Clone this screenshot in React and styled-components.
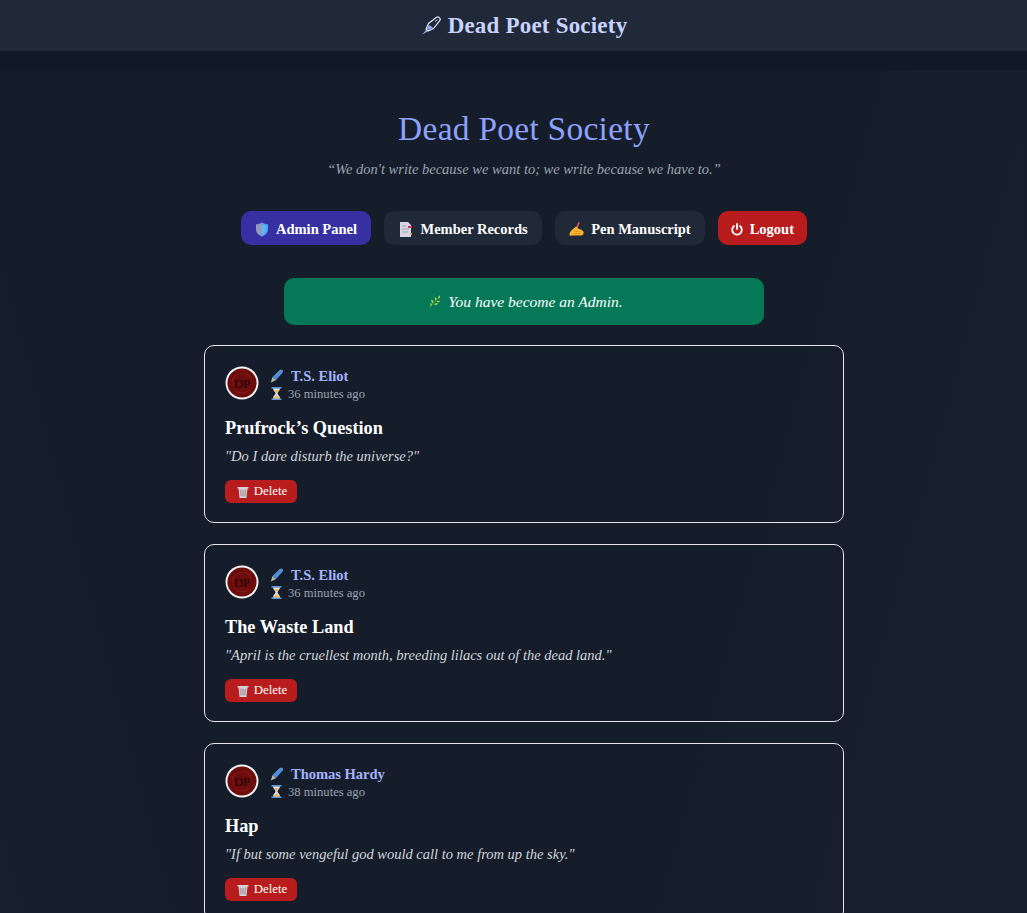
import React from "react";
import styled, { createGlobalStyle } from "styled-components";

const GlobalStyle = createGlobalStyle`
  html, body { margin: 0; padding: 0; background: #111827; }
  body { font-family: "Liberation Serif", "DejaVu Serif", serif; color: #e5e7eb; }
`;

const Page = styled.div`
  height: 913px;
  overflow: hidden;
  box-sizing: border-box;
`;

const TopBar = styled.header`
  height: 51px;
  padding-left: 21px;
  background: #1f2937;
  display: flex;
  align-items: center;
  justify-content: center;
  gap: 7px;
`;

const BarTitle = styled.span`
  color: #c7d2fe;
  font-size: 23px;
  font-weight: 700;
  letter-spacing: 0.2px;
`;

const Main = styled.main`
  margin-top: 19px;
  padding: 38px 0 0 21px;
  min-height: 900px;
  background:
    linear-gradient(105deg, rgba(255, 255, 255, 0) 60%, rgba(255, 255, 255, 0.006) 85%),
    linear-gradient(75deg, rgba(255, 255, 255, 0.006) 0%, rgba(255, 255, 255, 0) 25%),
    #151d2b;
  display: flex;
  flex-direction: column;
  align-items: center;
`;

const Heading = styled.h1`
  margin: 0;
  color: #8ea2fb;
  font-size: 33.4px;
  line-height: 42px;
  font-weight: 400;
  letter-spacing: 0.3px;
`;

const Motto = styled.p`
  margin: 8px 0 0;
  color: #9ca3af;
  font-size: 14.5px;
  line-height: 22px;
  font-style: italic;
`;

const Nav = styled.nav`
  margin-top: 31px;
  display: flex;
  gap: 13px;
`;

const NavButton = styled.a`
  height: 34px;
  padding: 2px ${(p) => p.$pad || 14}px 0;
  box-sizing: border-box;
  border-radius: 10px;
  display: flex;
  align-items: center;
  gap: 7px;
  color: #fff;
  font-size: 14.5px;
  font-weight: 700;
  background: ${(p) => p.$bg};
`;

const Flash = styled.div`
  margin-top: 33px;
  width: 480px;
  height: 47px;
  padding-left: 4px;
  box-sizing: border-box;
  border-radius: 10px;
  background: #047857;
  display: flex;
  align-items: center;
  justify-content: center;
  gap: 6px;
  color: #fff;
  font-size: 15.5px;
  font-style: italic;
`;

const Feed = styled.div`
  margin-top: 20px;
  width: 640px;
  display: flex;
  flex-direction: column;
  gap: 21px;
`;

const Card = styled.article`
  height: 178px;
  box-sizing: border-box;
  border: 1px solid #e5e7eb;
  border-radius: 10px;
  padding: 20px;
`;

const Author = styled.div`
  display: flex;
  align-items: center;
  gap: 11px;
  height: 34px;
`;

const Lines = styled.div`
  display: flex;
  flex-direction: column;
  gap: 1px;
  padding-top: 2px;
`;

const NameRow = styled.div`
  display: flex;
  align-items: center;
  gap: 7px;
  color: #a5b4fc;
  font-size: 14.5px;
  font-weight: 700;
  line-height: 18px;
`;

const TimeRow = styled.div`
  display: flex;
  align-items: center;
  gap: 6px;
  padding-left: 1px;
  color: #9ca3af;
  font-size: 12.6px;
  line-height: 16px;
`;

const PoemTitle = styled.h2`
  margin: 16px 0 0;
  color: #fff;
  font-size: 18.3px;
  line-height: 25px;
  font-weight: 700;
`;

const Quote = styled.p`
  margin: 5px 0 0;
  color: #d1d5db;
  font-size: 14.5px;
  line-height: 21px;
  font-style: italic;
`;

const DeleteButton = styled.button`
  margin-top: 13px;
  width: 72px;
  height: 23px;
  border: 0;
  border-radius: 6px;
  background: #b91c1c;
  color: #fff;
  font-family: inherit;
  font-size: 12.8px;
  display: flex;
  align-items: center;
  justify-content: center;
  gap: 5px;
  padding: 0 0 0 2px;
`;

const Quill = () => (
  <svg width="20" height="20" viewBox="0 0 20 20" fill="none">
    <path d="M19 2.500c-.8-1.300-2.200-1.800-3.500-1.300L7.500 7.500 5 13l2 2 5.500-2.500 6-7.500c.7-.8 1-1.700.5-2.500z" fill="#1f2937" stroke="#e0e7ff" strokeWidth="1.200" />
    <path d="M7.800 9l4.200 2.500-4 2.300-2.300-.9z" fill="#93a8f4" />
    <path d="M14 5.500l2.500-1.800" stroke="#c7d2fe" strokeWidth="1" />
    <path d="M5.500 13.500L1 18.800l5.300-3.300z" fill="#a5b4fc" />
  </svg>
);

const Shield = () => (
  <svg width="14" height="15" viewBox="0 0 14 15">
    <path d="M7 .5c2 1.300 3.800 1.700 6 1.800v5c0 3.500-2.500 5.800-6 7.200z" fill="#4fa8f5" />
    <path d="M7 .5C5 1.800 3.200 2.200 1 2.300v5c0 3.500 2.500 5.800 6 7.200z" fill="#8e9ac0" />
    <path d="M7 3c1.400.8 2.700 1.100 4 1.200v3c0 2.500-1.700 4-4 5.200z" fill="#64b5f6" />
  </svg>
);

const Records = () => (
  <svg width="15" height="15" viewBox="0 0 15 15">
    <path d="M2 0h8l3 3v12H2z" fill="#d9d4e4" />
    <path d="M4 4h4M4 7h7M4 10h6" stroke="#a89fb8" strokeWidth="1" />
    <rect x="10" y="4" width="4" height="2" fill="#d6364a" />
    <rect x="12" y="11" width="2" height="2" fill="#e6a23c" />
  </svg>
);

const WritingHand = () => (
  <svg width="15" height="15" viewBox="0 0 15 15">
    <path d="M9.500 0l1.500.8L8.500 6 7 5.300z" fill="#e2574c" />
    <path d="M.5 13c-.4-1.500 1-4 3-5.500L7 4.500c1 .5 1.800 1.300 2.500 2.300 2 .4 4 1.500 5 3 .5 1.700-.3 3.700-2 3.700H3C1.800 14 .8 14 .5 13z" fill="#fbb32f" />
    <path d="M5 9.500h6M4 11.500h8" stroke="#e8912a" strokeWidth="0.900" />
  </svg>
);

const Power = () => (
  <svg width="12" height="13" viewBox="0 0 12 13" fill="none" stroke="#fff" strokeWidth="1.800" strokeLinecap="round">
    <path d="M6 1v5" />
    <path d="M3 3a4.800 4.800 0 1 0 6 0" />
  </svg>
);

const Herb = () => (
  <svg width="13" height="13" viewBox="0 0 13 13">
    <path d="M1 12.500C3 9 6 6 11 2" stroke="#7aa32a" strokeWidth="0.900" fill="none" />
    <path d="M4 8C2.500 7.500 2 6 2.500 4.500 4 5.200 4.800 6.500 4 8zM7 5.500C6 5 5.500 3.500 6 2c1.300.8 1.800 2 1 3.500zM9.500 3.500C9 2.500 9.500 1 10.800.500c.4 1.300 0 2.500-1.300 3zM5 9.500c1-1.300 2.800-1.500 4-1-.8 1.300-2.500 1.800-4 1zM7.500 6.800c.9-1 2.500-1.300 3.800-.8-.8 1.200-2.300 1.500-3.800.8zM2 11c-.8-1-.8-2.300-.2-3.300C2.800 8.500 3 9.800 2 11z" fill="#b7e34a" />
  </svg>
);

const Pen = () => (
  <svg width="14" height="14" viewBox="0 0 14 14">
    <path d="M2.500 8L9.700 1c.9-.9 2.100-.7 2.800 0 .7.700.9 1.900 0 2.800L5.800 11.300z" fill="#4f8fd6" />
    <path d="M2.500 8l3.300 3.300L.8 13.400z" fill="#b9b6ac" />
  </svg>
);

const Hourglass = () => (
  <svg width="11" height="13" viewBox="0 0 11 13">
    <rect x="0.500" y="0" width="10" height="1.600" fill="#5b9bd5" />
    <rect x="0.500" y="11.400" width="10" height="1.600" fill="#5b9bd5" />
    <path d="M2 1.600h7c0 2.500-2.500 3.400-2.500 4.900S9 9 9 11.400H2c0-2.400 2.500-3.400 2.500-4.900S2 4.100 2 1.600z" fill="#dbe7f0" />
    <path d="M3 3h5c-.4 1.300-2.500 2-2.500 3.500C5.500 5 3.400 4.300 3 3zM2.800 11.400c.4-1.800 1.800-2.800 2.700-3.200.9.400 2.300 1.400 2.700 3.200z" fill="#f4b860" />
  </svg>
);

const Bin = () => (
  <svg width="12" height="12" viewBox="0 0 12 12">
    <path d="M0.500 1h11v1.500h-1L9.500 12h-7l-1-9.500h-1z" fill="#d5cfd8" />
    <path d="M3.500 3.500l.6 7M6 3.500v7M8.500 3.500l-.6 7M2.300 5h7.400M2.600 7h6.800M2.800 9h6.400" stroke="#a08f9c" strokeWidth="0.700" />
  </svg>
);

const SealLetters = styled.text`
  font-family: "Liberation Serif", serif;
  font-size: 13px;
  fill: #140303;
  text-anchor: middle;
`;

const Seal = () => (
  <svg width="34" height="34" viewBox="0 0 34 34" style={{ flexShrink: 0 }}>
    <circle cx="17" cy="17" r="16.500" fill="#f3f4f6" />
    <circle cx="17" cy="17" r="14.600" fill="#6f0d0d" />
    <circle cx="17" cy="17" r="10" fill="none" stroke="#8c1a1a" strokeWidth="1" />
    <path d="M7 11c3-4 8-5 12-4M27 12c1 4 0 8-3 12M11 26c-3-2-5-6-4-10" fill="none" stroke="#4d0808" strokeWidth="0.800" />
    <SealLetters x="17" y="21.500">DP</SealLetters>
  </svg>
);

const posts = [
  { author: "T.S. Eliot", ago: "36 minutes ago", title: "Prufrock’s Question", line: "\"Do I dare disturb the universe?\"" },
  { author: "T.S. Eliot", ago: "36 minutes ago", title: "The Waste Land", line: "\"April is the cruellest month, breeding lilacs out of the dead land.\"" },
  { author: "Thomas Hardy", ago: "38 minutes ago", title: "Hap", line: "\"If but some vengeful god would call to me from up the sky.\"" },
];

export default function App() {
  return (
    <Page>
      <GlobalStyle />
      <TopBar>
        <Quill />
        <BarTitle>Dead Poet Society</BarTitle>
      </TopBar>
      <Main>
        <Heading>Dead Poet Society</Heading>
        <Motto>“We don't write because we want to; we write because we have to.”</Motto>
        <Nav>
          <NavButton $bg="#3730a3"><Shield />Admin Panel</NavButton>
          <NavButton $bg="#1f2937" $pad={14.5}><Records />Member Records</NavButton>
          <NavButton $bg="#1f2937"><WritingHand />Pen Manuscript</NavButton>
          <NavButton $bg="#b91c1c" $pad={13}><Power />Logout</NavButton>
        </Nav>
        <Flash><Herb />You have become an Admin.</Flash>
        <Feed>
          {posts.map((post) => (
            <Card key={post.title}>
              <Author>
                <Seal />
                <Lines>
                  <NameRow><Pen />{post.author}</NameRow>
                  <TimeRow><Hourglass />{post.ago}</TimeRow>
                </Lines>
              </Author>
              <PoemTitle>{post.title}</PoemTitle>
              <Quote>{post.line}</Quote>
              <DeleteButton><Bin />Delete</DeleteButton>
            </Card>
          ))}
        </Feed>
      </Main>
    </Page>
  );
}
